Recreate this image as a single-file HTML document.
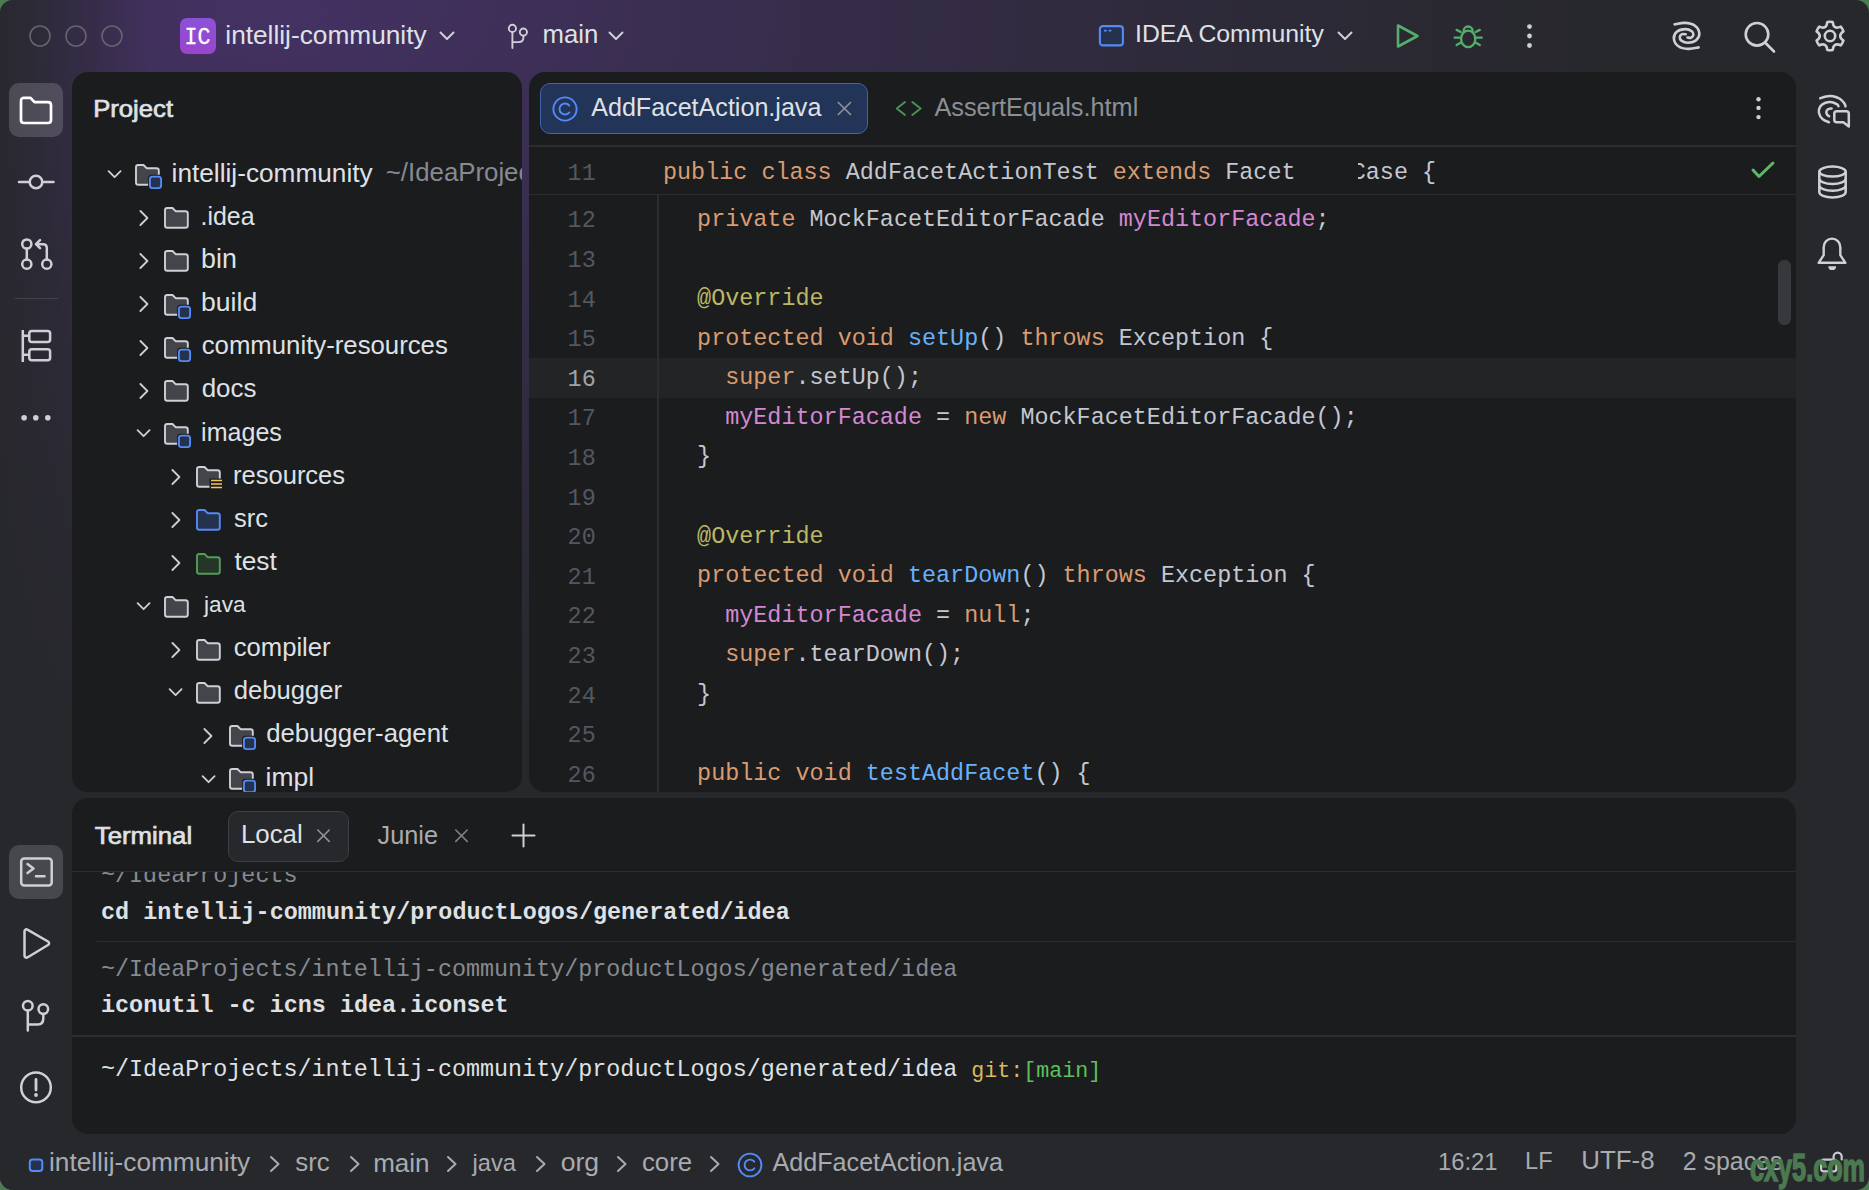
<!DOCTYPE html><html><head><meta charset="utf-8"><style>
html,body{margin:0;padding:0;}
body{width:1869px;height:1190px;overflow:hidden;position:relative;background:#4c7d51;}
.t{position:absolute;white-space:pre;}
.s{font-family:"Liberation Sans", sans-serif;}
.m{font-family:"Liberation Mono", monospace;}
#win{position:absolute;left:0;top:0;width:1869px;height:1190px;border-radius:13px;overflow:hidden;background:#27282c;}
#glow{position:absolute;left:0;top:0;width:1869px;height:1190px;background:linear-gradient(90deg, rgba(39,40,44,0.92) 0px, rgba(39,40,44,0.62) 55px, rgba(39,40,44,0) 150px), radial-gradient(ellipse 1350px 740px at 270px 10px, rgba(100,60,160,0.48) 0%, rgba(96,58,155,0.33) 30%, rgba(92,56,150,0.14) 65%, rgba(90,52,150,0) 100%);}
.panel{position:absolute;background:#1b1c1e;border-radius:16px;overflow:hidden;}
</style></head><body><div id="win"><div id="glow"></div>

<svg style="position:absolute;left:27.5px;top:24.2px;" width="24" height="24" viewBox="0 0 24 24" fill="none"><circle cx="12" cy="12" r="10" stroke="#65636f" stroke-width="1.6"/></svg>
<svg style="position:absolute;left:63.5px;top:24.2px;" width="24" height="24" viewBox="0 0 24 24" fill="none"><circle cx="12" cy="12" r="10" stroke="#65636f" stroke-width="1.6"/></svg>
<svg style="position:absolute;left:99.5px;top:24.2px;" width="24" height="24" viewBox="0 0 24 24" fill="none"><circle cx="12" cy="12" r="10" stroke="#65636f" stroke-width="1.6"/></svg>
<div style="position:absolute;left:180px;top:18px;width:36px;height:36px;border-radius:7px;background:linear-gradient(180deg,#8c51d8,#9a45cc);"></div>
<div class="t m" style="left:184.5px;top:27.6px;font-size:21.6px;line-height:21.6px;color:#ffffff;transform:scaleY(1.13);transform-origin:0 76.6%;-webkit-text-stroke:0.25px #fff;">IC</div>
<div class="t s" style="left:225.3px;top:21.9px;font-size:26.26px;line-height:26.26px;color:#dfe1e5;">intellij-community</div>
<svg style="position:absolute;left:439px;top:31px;" width="16" height="10" viewBox="0 0 16 10" fill="none"><path d="M1.5 1.5 L8 8 L14.5 1.5" stroke="#ced0d6" stroke-width="2" stroke-linecap="round" stroke-linejoin="round"/></svg>
<svg style="position:absolute;left:500px;top:15px;" width="40" height="40" viewBox="0 0 40 40" fill="none"><circle cx="12.4" cy="13.4" r="3.6" stroke="#ced0d6" stroke-width="1.9"/><circle cx="23.4" cy="17.1" r="3.6" stroke="#ced0d6" stroke-width="1.9"/><path d="M12.4 17 V33 M23.4 20.7 V22.3 C23.4 25.3 21.7 27.1 18.8 27.1 H12.4" stroke="#ced0d6" stroke-width="1.9" stroke-linecap="round"/></svg>
<div class="t s" style="left:542.6px;top:22.3px;font-size:25.72px;line-height:25.72px;color:#dfe1e5;">main</div>
<svg style="position:absolute;left:608px;top:31px;" width="16" height="10" viewBox="0 0 16 10" fill="none"><path d="M1.5 1.5 L8 8 L14.5 1.5" stroke="#ced0d6" stroke-width="2" stroke-linecap="round" stroke-linejoin="round"/></svg>
<svg style="position:absolute;left:1098px;top:24px;" width="27" height="24" viewBox="0 0 27 24" fill="none"><rect x="1.9" y="2.1" width="23" height="19.3" rx="3" fill="#25324d" stroke="#548af7" stroke-width="2.1"/><path d="M6 6.6 H8.8 M10.6 6.6 H13.4" stroke="#548af7" stroke-width="1.7"/></svg>
<div class="t s" style="left:1135.0px;top:22.4px;font-size:24.81px;line-height:24.81px;color:#dfe1e5;">IDEA Community</div>
<svg style="position:absolute;left:1337px;top:31px;" width="16" height="10" viewBox="0 0 16 10" fill="none"><path d="M1.5 1.5 L8 8 L14.5 1.5" stroke="#ced0d6" stroke-width="2" stroke-linecap="round" stroke-linejoin="round"/></svg>
<svg style="position:absolute;left:1393px;top:21px;" width="30" height="30" viewBox="0 0 30 30" fill="none"><path d="M5 4.5 L24.5 15 L5 25.5 Z" stroke="#55ae6b" stroke-width="2.6" stroke-linejoin="round"/></svg>
<svg style="position:absolute;left:1450px;top:20px;" width="36" height="30" viewBox="0 0 36 30" fill="none"><path d="M13.6 11 A4.5 4.5 0 0 1 22.6 11" stroke="#55ae6b" stroke-width="2.3" stroke-linecap="round"/><ellipse cx="18.2" cy="18.9" rx="7.1" ry="8.2" stroke="#55ae6b" stroke-width="2.3"/><path d="M6.6 9.9 L10.8 12 M4.6 17.7 H10.5 M6.6 25.1 L11 22.6 M29.8 9.9 L25.6 12 M31.8 17.7 H25.9 M29.8 25.1 L25.4 22.6" stroke="#55ae6b" stroke-width="2.3" stroke-linecap="round"/></svg>
<svg style="position:absolute;left:1525px;top:24px;" width="10" height="26" viewBox="0 0 10 26" fill="none"><circle cx="4.5" cy="2.6" r="2.4" fill="#ced0d6"/><circle cx="4.5" cy="12" r="2.4" fill="#ced0d6"/><circle cx="4.5" cy="21.5" r="2.4" fill="#ced0d6"/></svg>
<svg style="position:absolute;left:1666px;top:16px;" width="40" height="40" viewBox="0 0 40 40" fill="none"><path d="M8.60 8.40 C10.33 8.15 15.63 6.70 19.00 6.90 C22.37 7.10 26.42 7.92 28.80 9.60 C31.18 11.28 33.03 14.60 33.30 17.00 C33.57 19.40 32.28 22.38 30.40 24.00 C28.52 25.62 24.50 26.60 22.00 26.70 C19.50 26.80 16.77 25.57 15.40 24.60 C14.03 23.63 13.68 21.98 13.80 20.90 C13.92 19.82 15.12 18.53 16.10 18.10 C17.08 17.67 19.10 18.27 19.70 18.30 " stroke="#ced0d6" stroke-width="2.6" stroke-linecap="round"/><path d="M32.60 31.40 C30.87 31.65 25.57 33.10 22.20 32.90 C18.83 32.70 14.78 31.88 12.40 30.20 C10.02 28.52 8.17 25.20 7.90 22.80 C7.63 20.40 8.92 17.42 10.80 15.80 C12.68 14.18 16.70 13.20 19.20 13.10 C21.70 13.00 24.43 14.23 25.80 15.20 C27.17 16.17 27.52 17.82 27.40 18.90 C27.28 19.98 26.08 21.27 25.10 21.70 C24.12 22.13 22.10 21.53 21.50 21.50 " stroke="#ced0d6" stroke-width="2.6" stroke-linecap="round"/></svg>
<svg style="position:absolute;left:1741px;top:19px;" width="36" height="36" viewBox="0 0 36 36" fill="none"><circle cx="16" cy="15.3" r="11.3" stroke="#ced0d6" stroke-width="2.6"/><path d="M24.5 24 L33 32.5" stroke="#ced0d6" stroke-width="2.6" stroke-linecap="round"/></svg>
<svg style="position:absolute;left:1814px;top:20px;" width="32" height="32" viewBox="0 0 32 32" fill="none"><path d="M13.29 2.06 A14.2 14.2 0 0 1 18.71 2.06 Q19.49 9.96 26.72 6.68 A14.2 14.2 0 0 1 29.43 11.38 Q22.97 16.00 29.43 20.62 A14.2 14.2 0 0 1 26.72 25.32 Q19.49 22.04 18.71 29.94 A14.2 14.2 0 0 1 13.29 29.94 Q12.51 22.04 5.28 25.32 A14.2 14.2 0 0 1 2.57 20.62 Q9.03 16.00 2.57 11.38 A14.2 14.2 0 0 1 5.28 6.68 Q12.51 9.96 13.29 2.06 Z" stroke="#ced0d6" stroke-width="2.6" stroke-linejoin="round"/><circle cx="16" cy="16" r="5.2" stroke="#ced0d6" stroke-width="2.6"/></svg>
<div style="position:absolute;left:9px;top:83px;width:54px;height:54px;background:rgba(255,255,255,0.16);border-radius:10px;"></div>
<svg style="position:absolute;left:18px;top:95px;" width="36" height="30" viewBox="0 0 36 30" fill="none"><path d="M3 6 C3 4 4 2.8 6 2.8 H12.5 L16.5 7.2 H30 C32 7.2 33 8.3 33 10.3 V25 C33 27 32 28 30 28 H6 C4 28 3 27 3 25 Z" stroke="#ffffff" stroke-width="2.7" stroke-linejoin="round"/></svg>
<svg style="position:absolute;left:16px;top:172px;" width="40" height="20" viewBox="0 0 40 20" fill="none"><circle cx="20" cy="10" r="6.3" stroke="#ced0d6" stroke-width="2.6"/><path d="M3 10 H13.5 M26.5 10 H37.5" stroke="#ced0d6" stroke-width="2.6" stroke-linecap="round"/></svg>
<svg style="position:absolute;left:16px;top:234px;" width="40" height="40" viewBox="0 0 40 40" fill="none"><circle cx="10.8" cy="10" r="4.6" stroke="#ced0d6" stroke-width="2.5"/><circle cx="10.8" cy="30.2" r="4.6" stroke="#ced0d6" stroke-width="2.5"/><circle cx="30.8" cy="30.2" r="4.6" stroke="#ced0d6" stroke-width="2.5"/><path d="M10.8 14.6 V25.6 M30.8 25.6 V14 C30.8 11.5 29.5 10.2 27 10.2 H20.5 M24 6.2 L20 10.2 L24 14.2" stroke="#ced0d6" stroke-width="2.5" stroke-linecap="round" stroke-linejoin="round"/></svg>
<div style="position:absolute;left:14.5px;top:298px;width:43.5px;height:1.4px;background:#414249;border-radius:0px;"></div>
<svg style="position:absolute;left:18px;top:326px;" width="36" height="40" viewBox="0 0 36 40" fill="none"><path d="M4.8 4 V36 M4.8 9.8 H11 M4.8 28.7 H11" stroke="#ced0d6" stroke-width="2.5"/><rect x="11.3" y="5" width="20.8" height="11" rx="2.5" stroke="#ced0d6" stroke-width="2.5"/><rect x="11.3" y="23.3" width="20.8" height="11" rx="2.5" stroke="#ced0d6" stroke-width="2.5"/></svg>
<svg style="position:absolute;left:18px;top:412px;" width="36" height="12" viewBox="0 0 36 12" fill="none"><circle cx="6.1" cy="5.8" r="2.8" fill="#ced0d6"/><circle cx="17.8" cy="5.8" r="2.8" fill="#ced0d6"/><circle cx="29.8" cy="5.8" r="2.8" fill="#ced0d6"/></svg>
<div style="position:absolute;left:9px;top:845px;width:54px;height:54px;background:rgba(255,255,255,0.15);border-radius:10px;"></div>
<svg style="position:absolute;left:18px;top:854px;" width="36" height="36" viewBox="0 0 36 36" fill="none"><rect x="3.2" y="4.6" width="30.5" height="27" rx="3" stroke="#ced0d6" stroke-width="2.5"/><path d="M9.5 10 L15.5 14.5 L9.5 19 M18 22.3 H26.5" stroke="#ced0d6" stroke-width="2.5" stroke-linecap="round" stroke-linejoin="round"/></svg>
<svg style="position:absolute;left:18px;top:926px;" width="36" height="40" viewBox="0 0 36 40" fill="none"><path d="M6.5 5.5 C6.5 3.5 8 2.8 9.8 3.8 L30 15.5 C31.5 16.5 31.5 18 30 19 L9.8 31.2 C8 32.2 6.5 31.5 6.5 29.5 Z" stroke="#ced0d6" stroke-width="2.5" stroke-linejoin="round"/></svg>
<svg style="position:absolute;left:18px;top:996px;" width="36" height="40" viewBox="0 0 36 40" fill="none"><circle cx="9.8" cy="9.8" r="4.8" stroke="#ced0d6" stroke-width="2.5"/><circle cx="25.3" cy="13.1" r="4.8" stroke="#ced0d6" stroke-width="2.5"/><path d="M9.8 14.6 V34.5 M25.3 17.9 V22.3 C25.3 26 23.5 28.6 19.8 28.6 H9.8" stroke="#ced0d6" stroke-width="2.5" stroke-linecap="round"/></svg>
<svg style="position:absolute;left:18px;top:1069px;" width="36" height="36" viewBox="0 0 36 36" fill="none"><circle cx="18" cy="18.4" r="14.8" stroke="#ced0d6" stroke-width="2.5"/><path d="M18 10.5 V21" stroke="#ced0d6" stroke-width="2.8" stroke-linecap="round"/><circle cx="18" cy="26" r="1.9" fill="#ced0d6"/></svg>
<svg style="position:absolute;left:1812px;top:88px;" width="44" height="44" viewBox="0 0 44 44" fill="none"><path d="M8.30 10.30 C9.25 9.98 11.88 8.73 14.00 8.40 C16.12 8.07 18.70 7.90 21.00 8.30 C23.30 8.70 25.92 9.65 27.80 10.80 C29.68 11.95 31.35 13.93 32.30 15.20 C33.25 16.47 33.30 17.87 33.50 18.40 " stroke="#ced0d6" stroke-width="2.5" stroke-linecap="round"/><path d="M17.00 34.30 C15.93 33.78 12.28 32.82 10.60 31.20 C8.92 29.58 7.27 26.75 6.90 24.60 C6.53 22.45 7.28 19.95 8.40 18.30 C9.52 16.65 11.67 15.38 13.60 14.70 C15.53 14.02 18.07 13.92 20.00 14.20 C21.93 14.48 24.12 15.73 25.20 16.40 C26.28 17.07 26.28 17.90 26.50 18.20 " stroke="#ced0d6" stroke-width="2.5" stroke-linecap="round"/><path d="M19.60 20.50 C19.02 20.63 16.98 20.73 16.10 21.30 C15.22 21.87 14.45 22.98 14.30 23.90 C14.15 24.82 14.73 26.07 15.20 26.80 C15.67 27.53 16.78 28.05 17.10 28.30 " stroke="#ced0d6" stroke-width="2.5" stroke-linecap="round"/><path d="M24.8 23.3 H34.3 Q36.8 23.3 36.8 25.8 V38.4 L31.3 34.3 H24.8 Q22.3 34.3 22.3 31.8 V25.8 Q22.3 23.3 24.8 23.3 Z" stroke="#ced0d6" stroke-width="2.5" stroke-linejoin="round"/></svg>
<svg style="position:absolute;left:1814px;top:162px;" width="40" height="40" viewBox="0 0 40 40" fill="none"><ellipse cx="18.5" cy="9.6" rx="13.2" ry="5" stroke="#ced0d6" stroke-width="2.5"/><path d="M5.3 9.6 V30 C5.3 33 11 35.4 18.5 35.4 C26 35.4 31.7 33 31.7 30 V9.6 M5.3 16.5 C5.3 19.5 11 22 18.5 22 C26 22 31.7 19.5 31.7 16.5 M5.3 23.3 C5.3 26.3 11 28.8 18.5 28.8 C26 28.8 31.7 26.3 31.7 23.3" stroke="#ced0d6" stroke-width="2.5"/></svg>
<svg style="position:absolute;left:1814px;top:234px;" width="40" height="40" viewBox="0 0 40 40" fill="none"><path d="M4.6 28.8 L9.7 21.2 V12.9 A8.3 8.3 0 0 1 26.3 12.9 V21.2 L31.4 28.8 Z" stroke="#ced0d6" stroke-width="2.4" stroke-linejoin="round"/><path d="M14.3 32.2 H22.1 A3.9 3.9 0 0 1 14.3 32.2 Z" fill="#ced0d6"/></svg>
<div class="panel" style="left:72px;top:72px;width:450px;height:720px;">
<div class="t s" style="left:21.2px;top:23.9px;font-size:25.67px;line-height:25.67px;color:#dfe1e5;-webkit-text-stroke:0.75px #dfe1e5;transform:scaleY(0.93);transform-origin:0 84.67%;">Project</div>
<svg style="position:absolute;left:34.0px;top:97.4px;" width="18" height="12" viewBox="0 0 18 12" fill="none"><path d="M2.6 2.2 L8.6 8.2 L14.6 2.2" stroke="#ced0d6" stroke-width="1.8" stroke-linecap="round" stroke-linejoin="round"/></svg>
<svg style="position:absolute;left:61.849999999999994px;top:91.14999999999998px;" width="30" height="30" viewBox="0 0 30 30" fill="none"><path d="M2 4.3 C2 2.8 2.8 2 4.3 2 H9.5 L12.6 5.2 H22.5 C24 5.2 24.8 6 24.8 7.5 V19.5 C24.8 21 24 21.8 22.5 21.8 H4.3 C2.8 21.8 2 21 2 19.5 Z" fill="#43454a" stroke="#ced0d6" stroke-width="1.9" stroke-linejoin="round"/><rect x="14.1" y="11.8" width="14.8" height="15.2" rx="3.6" fill="#1b1c1e"/><rect x="15.9" y="13.6" width="11.2" height="11.5" rx="2.6" fill="#25324d" stroke="#548af7" stroke-width="1.9"/></svg>
<div class="t s" style="left:99.6px;top:87.8px;font-size:26.22px;line-height:26.22px;color:#dfe1e5;">intellij-community</div>
<div class="t s" style="left:313.8px;top:88.2px;font-size:25.8px;line-height:25.8px;color:#868a91;">~/IdeaProjects</div>
<svg style="position:absolute;left:65.5px;top:137.16px;" width="12" height="18" viewBox="0 0 12 18" fill="none"><path d="M2.4 2 L9.4 9 L2.4 16" stroke="#ced0d6" stroke-width="1.8" stroke-linecap="round" stroke-linejoin="round"/></svg>
<svg style="position:absolute;left:90.94999999999999px;top:134.30999999999997px;" width="30" height="30" viewBox="0 0 30 30" fill="none"><path d="M2 4.3 C2 2.8 2.8 2 4.3 2 H9.5 L12.6 5.2 H22.5 C24 5.2 24.8 6 24.8 7.5 V19.5 C24.8 21 24 21.8 22.5 21.8 H4.3 C2.8 21.8 2 21 2 19.5 Z" fill="#43454a" stroke="#ced0d6" stroke-width="1.9" stroke-linejoin="round"/></svg>
<div class="t s" style="left:128.5px;top:132.0px;font-size:24.95px;line-height:24.95px;color:#dfe1e5;">.idea</div>
<svg style="position:absolute;left:65.5px;top:180.32px;" width="12" height="18" viewBox="0 0 12 18" fill="none"><path d="M2.4 2 L9.4 9 L2.4 16" stroke="#ced0d6" stroke-width="1.8" stroke-linecap="round" stroke-linejoin="round"/></svg>
<svg style="position:absolute;left:90.94999999999999px;top:177.46999999999997px;" width="30" height="30" viewBox="0 0 30 30" fill="none"><path d="M2 4.3 C2 2.8 2.8 2 4.3 2 H9.5 L12.6 5.2 H22.5 C24 5.2 24.8 6 24.8 7.5 V19.5 C24.8 21 24 21.8 22.5 21.8 H4.3 C2.8 21.8 2 21 2 19.5 Z" fill="#43454a" stroke="#ced0d6" stroke-width="1.9" stroke-linejoin="round"/></svg>
<div class="t s" style="left:129.1px;top:173.6px;font-size:26.8px;line-height:26.8px;color:#dfe1e5;">bin</div>
<svg style="position:absolute;left:65.5px;top:223.48000000000002px;" width="12" height="18" viewBox="0 0 12 18" fill="none"><path d="M2.4 2 L9.4 9 L2.4 16" stroke="#ced0d6" stroke-width="1.8" stroke-linecap="round" stroke-linejoin="round"/></svg>
<svg style="position:absolute;left:90.94999999999999px;top:220.63px;" width="30" height="30" viewBox="0 0 30 30" fill="none"><path d="M2 4.3 C2 2.8 2.8 2 4.3 2 H9.5 L12.6 5.2 H22.5 C24 5.2 24.8 6 24.8 7.5 V19.5 C24.8 21 24 21.8 22.5 21.8 H4.3 C2.8 21.8 2 21 2 19.5 Z" fill="#43454a" stroke="#ced0d6" stroke-width="1.9" stroke-linejoin="round"/><rect x="14.1" y="11.8" width="14.8" height="15.2" rx="3.6" fill="#1b1c1e"/><rect x="15.9" y="13.6" width="11.2" height="11.5" rx="2.6" fill="#25324d" stroke="#548af7" stroke-width="1.9"/></svg>
<div class="t s" style="left:129.1px;top:217.0px;font-size:26.55px;line-height:26.55px;color:#dfe1e5;">build</div>
<svg style="position:absolute;left:65.5px;top:266.64px;" width="12" height="18" viewBox="0 0 12 18" fill="none"><path d="M2.4 2 L9.4 9 L2.4 16" stroke="#ced0d6" stroke-width="1.8" stroke-linecap="round" stroke-linejoin="round"/></svg>
<svg style="position:absolute;left:90.94999999999999px;top:263.78999999999996px;" width="30" height="30" viewBox="0 0 30 30" fill="none"><path d="M2 4.3 C2 2.8 2.8 2 4.3 2 H9.5 L12.6 5.2 H22.5 C24 5.2 24.8 6 24.8 7.5 V19.5 C24.8 21 24 21.8 22.5 21.8 H4.3 C2.8 21.8 2 21 2 19.5 Z" fill="#43454a" stroke="#ced0d6" stroke-width="1.9" stroke-linejoin="round"/><rect x="14.1" y="11.8" width="14.8" height="15.2" rx="3.6" fill="#1b1c1e"/><rect x="15.9" y="13.6" width="11.2" height="11.5" rx="2.6" fill="#25324d" stroke="#548af7" stroke-width="1.9"/></svg>
<div class="t s" style="left:129.7px;top:260.8px;font-size:25.75px;line-height:25.75px;color:#dfe1e5;">community-resources</div>
<svg style="position:absolute;left:65.5px;top:309.79999999999995px;" width="12" height="18" viewBox="0 0 12 18" fill="none"><path d="M2.4 2 L9.4 9 L2.4 16" stroke="#ced0d6" stroke-width="1.8" stroke-linecap="round" stroke-linejoin="round"/></svg>
<svg style="position:absolute;left:90.94999999999999px;top:306.94999999999993px;" width="30" height="30" viewBox="0 0 30 30" fill="none"><path d="M2 4.3 C2 2.8 2.8 2 4.3 2 H9.5 L12.6 5.2 H22.5 C24 5.2 24.8 6 24.8 7.5 V19.5 C24.8 21 24 21.8 22.5 21.8 H4.3 C2.8 21.8 2 21 2 19.5 Z" fill="#43454a" stroke="#ced0d6" stroke-width="1.9" stroke-linejoin="round"/></svg>
<div class="t s" style="left:129.7px;top:303.9px;font-size:25.9px;line-height:25.9px;color:#dfe1e5;">docs</div>
<svg style="position:absolute;left:63.0px;top:356.35999999999996px;" width="18" height="12" viewBox="0 0 18 12" fill="none"><path d="M2.6 2.2 L8.6 8.2 L14.6 2.2" stroke="#ced0d6" stroke-width="1.8" stroke-linecap="round" stroke-linejoin="round"/></svg>
<svg style="position:absolute;left:90.94999999999999px;top:350.10999999999996px;" width="30" height="30" viewBox="0 0 30 30" fill="none"><path d="M2 4.3 C2 2.8 2.8 2 4.3 2 H9.5 L12.6 5.2 H22.5 C24 5.2 24.8 6 24.8 7.5 V19.5 C24.8 21 24 21.8 22.5 21.8 H4.3 C2.8 21.8 2 21 2 19.5 Z" fill="#43454a" stroke="#ced0d6" stroke-width="1.9" stroke-linejoin="round"/><rect x="14.1" y="11.8" width="14.8" height="15.2" rx="3.6" fill="#1b1c1e"/><rect x="15.9" y="13.6" width="11.2" height="11.5" rx="2.6" fill="#25324d" stroke="#548af7" stroke-width="1.9"/></svg>
<div class="t s" style="left:129.1px;top:347.7px;font-size:25.06px;line-height:25.06px;color:#dfe1e5;">images</div>
<svg style="position:absolute;left:97.80000000000001px;top:396.12px;" width="12" height="18" viewBox="0 0 12 18" fill="none"><path d="M2.4 2 L9.4 9 L2.4 16" stroke="#ced0d6" stroke-width="1.8" stroke-linecap="round" stroke-linejoin="round"/></svg>
<svg style="position:absolute;left:123.25px;top:393.27px;" width="30" height="30" viewBox="0 0 30 30" fill="none"><path d="M2 4.3 C2 2.8 2.8 2 4.3 2 H9.5 L12.6 5.2 H22.5 C24 5.2 24.8 6 24.8 7.5 V19.5 C24.8 21 24 21.8 22.5 21.8 H4.3 C2.8 21.8 2 21 2 19.5 Z" fill="#43454a" stroke="#ced0d6" stroke-width="1.9" stroke-linejoin="round"/><rect x="14.5" y="13.5" width="13" height="12" fill="#1b1c1e"/><path d="M16 15.5 H27 M16 19 H27 M16 22.5 H27" stroke="#f2c55c" stroke-width="1.7"/></svg>
<div class="t s" style="left:161.1px;top:390.5px;font-size:25.5px;line-height:25.5px;color:#dfe1e5;">resources</div>
<svg style="position:absolute;left:97.80000000000001px;top:439.28px;" width="12" height="18" viewBox="0 0 12 18" fill="none"><path d="M2.4 2 L9.4 9 L2.4 16" stroke="#ced0d6" stroke-width="1.8" stroke-linecap="round" stroke-linejoin="round"/></svg>
<svg style="position:absolute;left:123.25px;top:436.42999999999995px;" width="30" height="30" viewBox="0 0 30 30" fill="none"><path d="M2 4.3 C2 2.8 2.8 2 4.3 2 H9.5 L12.6 5.2 H22.5 C24 5.2 24.8 6 24.8 7.5 V19.5 C24.8 21 24 21.8 22.5 21.8 H4.3 C2.8 21.8 2 21 2 19.5 Z" fill="#25324d" stroke="#548af7" stroke-width="1.9" stroke-linejoin="round"/></svg>
<div class="t s" style="left:162.1px;top:433.7px;font-size:25.44px;line-height:25.44px;color:#dfe1e5;">src</div>
<svg style="position:absolute;left:97.80000000000001px;top:482.43999999999994px;" width="12" height="18" viewBox="0 0 12 18" fill="none"><path d="M2.4 2 L9.4 9 L2.4 16" stroke="#ced0d6" stroke-width="1.8" stroke-linecap="round" stroke-linejoin="round"/></svg>
<svg style="position:absolute;left:123.25px;top:479.59000000000003px;" width="30" height="30" viewBox="0 0 30 30" fill="none"><path d="M2 4.3 C2 2.8 2.8 2 4.3 2 H9.5 L12.6 5.2 H22.5 C24 5.2 24.8 6 24.8 7.5 V19.5 C24.8 21 24 21.8 22.5 21.8 H4.3 C2.8 21.8 2 21 2 19.5 Z" fill="#253526" stroke="#559c5b" stroke-width="1.9" stroke-linejoin="round"/></svg>
<div class="t s" style="left:162.4px;top:476.2px;font-size:26.29px;line-height:26.29px;color:#dfe1e5;">test</div>
<svg style="position:absolute;left:63.0px;top:528.9999999999999px;" width="18" height="12" viewBox="0 0 18 12" fill="none"><path d="M2.6 2.2 L8.6 8.2 L14.6 2.2" stroke="#ced0d6" stroke-width="1.8" stroke-linecap="round" stroke-linejoin="round"/></svg>
<svg style="position:absolute;left:90.94999999999999px;top:522.75px;" width="30" height="30" viewBox="0 0 30 30" fill="none"><path d="M2 4.3 C2 2.8 2.8 2 4.3 2 H9.5 L12.6 5.2 H22.5 C24 5.2 24.8 6 24.8 7.5 V19.5 C24.8 21 24 21.8 22.5 21.8 H4.3 C2.8 21.8 2 21 2 19.5 Z" fill="#43454a" stroke="#ced0d6" stroke-width="1.9" stroke-linejoin="round"/></svg>
<div class="t s" style="left:132.1px;top:522.4px;font-size:22.63px;line-height:22.63px;color:#dfe1e5;">java</div>
<svg style="position:absolute;left:97.80000000000001px;top:568.76px;" width="12" height="18" viewBox="0 0 12 18" fill="none"><path d="M2.4 2 L9.4 9 L2.4 16" stroke="#ced0d6" stroke-width="1.8" stroke-linecap="round" stroke-linejoin="round"/></svg>
<svg style="position:absolute;left:123.25px;top:565.9100000000001px;" width="30" height="30" viewBox="0 0 30 30" fill="none"><path d="M2 4.3 C2 2.8 2.8 2 4.3 2 H9.5 L12.6 5.2 H22.5 C24 5.2 24.8 6 24.8 7.5 V19.5 C24.8 21 24 21.8 22.5 21.8 H4.3 C2.8 21.8 2 21 2 19.5 Z" fill="#43454a" stroke="#ced0d6" stroke-width="1.9" stroke-linejoin="round"/></svg>
<div class="t s" style="left:161.7px;top:563.0px;font-size:25.65px;line-height:25.65px;color:#dfe1e5;">compiler</div>
<svg style="position:absolute;left:95.25px;top:615.3199999999999px;" width="18" height="12" viewBox="0 0 18 12" fill="none"><path d="M2.6 2.2 L8.6 8.2 L14.6 2.2" stroke="#ced0d6" stroke-width="1.8" stroke-linecap="round" stroke-linejoin="round"/></svg>
<svg style="position:absolute;left:123.25px;top:609.07px;" width="30" height="30" viewBox="0 0 30 30" fill="none"><path d="M2 4.3 C2 2.8 2.8 2 4.3 2 H9.5 L12.6 5.2 H22.5 C24 5.2 24.8 6 24.8 7.5 V19.5 C24.8 21 24 21.8 22.5 21.8 H4.3 C2.8 21.8 2 21 2 19.5 Z" fill="#43454a" stroke="#ced0d6" stroke-width="1.9" stroke-linejoin="round"/></svg>
<div class="t s" style="left:161.7px;top:606.2px;font-size:25.67px;line-height:25.67px;color:#dfe1e5;">debugger</div>
<svg style="position:absolute;left:130.1px;top:655.0799999999999px;" width="12" height="18" viewBox="0 0 12 18" fill="none"><path d="M2.4 2 L9.4 9 L2.4 16" stroke="#ced0d6" stroke-width="1.8" stroke-linecap="round" stroke-linejoin="round"/></svg>
<svg style="position:absolute;left:155.54999999999998px;top:652.23px;" width="30" height="30" viewBox="0 0 30 30" fill="none"><path d="M2 4.3 C2 2.8 2.8 2 4.3 2 H9.5 L12.6 5.2 H22.5 C24 5.2 24.8 6 24.8 7.5 V19.5 C24.8 21 24 21.8 22.5 21.8 H4.3 C2.8 21.8 2 21 2 19.5 Z" fill="#43454a" stroke="#ced0d6" stroke-width="1.9" stroke-linejoin="round"/><rect x="14.1" y="11.8" width="14.8" height="15.2" rx="3.6" fill="#1b1c1e"/><rect x="15.9" y="13.6" width="11.2" height="11.5" rx="2.6" fill="#25324d" stroke="#548af7" stroke-width="1.9"/></svg>
<div class="t s" style="left:194.2px;top:649.3px;font-size:25.77px;line-height:25.77px;color:#dfe1e5;">debugger-agent</div>
<svg style="position:absolute;left:127.5px;top:701.64px;" width="18" height="12" viewBox="0 0 18 12" fill="none"><path d="M2.6 2.2 L8.6 8.2 L14.6 2.2" stroke="#ced0d6" stroke-width="1.8" stroke-linecap="round" stroke-linejoin="round"/></svg>
<svg style="position:absolute;left:155.54999999999998px;top:695.3900000000001px;" width="30" height="30" viewBox="0 0 30 30" fill="none"><path d="M2 4.3 C2 2.8 2.8 2 4.3 2 H9.5 L12.6 5.2 H22.5 C24 5.2 24.8 6 24.8 7.5 V19.5 C24.8 21 24 21.8 22.5 21.8 H4.3 C2.8 21.8 2 21 2 19.5 Z" fill="#43454a" stroke="#ced0d6" stroke-width="1.9" stroke-linejoin="round"/><rect x="14.1" y="11.8" width="14.8" height="15.2" rx="3.6" fill="#1b1c1e"/><rect x="15.9" y="13.6" width="11.2" height="11.5" rx="2.6" fill="#25324d" stroke="#548af7" stroke-width="1.9"/></svg>
<div class="t s" style="left:193.5px;top:691.8px;font-size:26.47px;line-height:26.47px;color:#dfe1e5;">impl</div>
</div>
<div class="panel" style="left:529px;top:72px;width:1267px;height:720px;">
<div style="position:absolute;left:11px;top:11.4px;width:328px;height:50.6px;box-sizing:border-box;border-radius:10px;background:#223457;border:1.7px solid #4066ac;"></div>
<svg style="position:absolute;left:21.299999999999955px;top:21.599999999999994px;" width="30" height="30" viewBox="0 0 30 30" fill="none"><circle cx="15" cy="15" r="11.6" stroke="#548af7" stroke-width="1.9"/><path d="M19.33 11.61 A5.5 5.5 0 1 0 19.33 18.39" stroke="#548af7" stroke-width="1.9" stroke-linecap="round"/></svg>
<div class="t s" style="left:62.2px;top:22.9px;font-size:25.1px;line-height:25.1px;color:#dfe1e5;">AddFacetAction.java</div>
<svg style="position:absolute;left:306px;top:28px;" width="18" height="18" viewBox="0 0 18 18" fill="none"><path d="M3.3 2.5 L15.5 14.5 M15.5 2.5 L3.3 14.5" stroke="#8f9297" stroke-width="1.7" stroke-linecap="round"/></svg>
<svg style="position:absolute;left:365px;top:27px;" width="30" height="20" viewBox="0 0 30 20" fill="none"><path d="M11 3 L2.8 9.5 L11 16 M18.3 3 L26.6 9.5 L18.3 16" stroke="#4b9055" stroke-width="2" stroke-linecap="round" stroke-linejoin="round"/></svg>
<div class="t s" style="left:405.4px;top:22.8px;font-size:25.31px;line-height:25.31px;color:#8c8f94;">AssertEquals.html</div>
<svg style="position:absolute;left:1225px;top:23px;" width="10" height="26" viewBox="0 0 10 26" fill="none"><circle cx="4.5" cy="4.2" r="2.2" fill="#ced0d6"/><circle cx="4.5" cy="12.9" r="2.2" fill="#ced0d6"/><circle cx="4.5" cy="22.1" r="2.2" fill="#ced0d6"/></svg>
<div style="position:absolute;left:0px;top:73px;width:1267px;height:1.6px;background:#2b2d30;border-radius:0px;"></div>
<div style="position:absolute;left:0px;top:121.5px;width:1267px;height:1.6px;background:#2b2d30;border-radius:0px;"></div>
<div style="position:absolute;left:0px;top:285.5px;width:1267px;height:40px;background:#222426;border-radius:0px;"></div>
<div style="position:absolute;left:128px;top:123px;width:1.5px;height:600px;background:#2b2d30;border-radius:0px;"></div>
<div style="position:absolute;left:1249px;top:188px;width:12.5px;height:65px;background:#37383c;border-radius:6px;"></div>
<svg style="position:absolute;left:1221px;top:88px;" width="26" height="20" viewBox="0 0 26 20" fill="none"><path d="M3 10 L9 16.5 L23 3" stroke="#5fb865" stroke-width="3" stroke-linecap="round" stroke-linejoin="round"/></svg>
<div class="t m" style="left:38.6px;top:90.2px;font-size:23.43px;line-height:23.43px;color:#54575e;">11</div>
<div class="t m" style="left:134.0px;top:88.6px;font-size:23.43px;line-height:23.43px;color:#c4c7d0;"><span style="color:#d99b70">public </span><span style="color:#d99b70">class </span><span style="color:#c4c7d0">AddFacetActionTest </span><span style="color:#d99b70">extends </span><span style="color:#c4c7d0">FacetTestCase {</span></div>
<div style="position:absolute;left:764.5px;top:78px;width:64.5px;height:42px;background:#1b1c1e;border-radius:0px;"></div>
<div class="t m" style="left:38.6px;top:137.4px;font-size:23.43px;line-height:23.43px;color:#54575e;">12</div>
<div class="t m" style="left:168.1px;top:135.8px;font-size:23.43px;line-height:23.43px;color:#c4c7d0;"><span style="color:#d99b70">private </span><span style="color:#c4c7d0">MockFacetEditorFacade </span><span style="color:#d488d2">myEditorFacade</span><span style="color:#c4c7d0">;</span></div>
<div class="t m" style="left:38.6px;top:177.0px;font-size:23.43px;line-height:23.43px;color:#54575e;">13</div>
<div class="t m" style="left:168.1px;top:175.4px;font-size:23.43px;line-height:23.43px;color:#c4c7d0;"></div>
<div class="t m" style="left:38.6px;top:216.6px;font-size:23.43px;line-height:23.43px;color:#54575e;">14</div>
<div class="t m" style="left:168.1px;top:215.0px;font-size:23.43px;line-height:23.43px;color:#c4c7d0;"><span style="color:#bdb765">@Override</span></div>
<div class="t m" style="left:38.6px;top:256.2px;font-size:23.43px;line-height:23.43px;color:#54575e;">15</div>
<div class="t m" style="left:168.1px;top:254.6px;font-size:23.43px;line-height:23.43px;color:#c4c7d0;"><span style="color:#d99b70">protected </span><span style="color:#d99b70">void </span><span style="color:#68b0fa">setUp</span><span style="color:#c4c7d0">() </span><span style="color:#d99b70">throws </span><span style="color:#c4c7d0">Exception {</span></div>
<div class="t m" style="left:38.6px;top:295.8px;font-size:23.43px;line-height:23.43px;color:#a1a3ab;">16</div>
<div class="t m" style="left:196.2px;top:294.2px;font-size:23.43px;line-height:23.43px;color:#c4c7d0;"><span style="color:#d99b70">super</span><span style="color:#c4c7d0">.setUp();</span></div>
<div class="t m" style="left:38.6px;top:335.4px;font-size:23.43px;line-height:23.43px;color:#54575e;">17</div>
<div class="t m" style="left:196.2px;top:333.8px;font-size:23.43px;line-height:23.43px;color:#c4c7d0;"><span style="color:#d488d2">myEditorFacade</span><span style="color:#c4c7d0"> = </span><span style="color:#d99b70">new </span><span style="color:#c4c7d0">MockFacetEditorFacade();</span></div>
<div class="t m" style="left:38.6px;top:375.0px;font-size:23.43px;line-height:23.43px;color:#54575e;">18</div>
<div class="t m" style="left:168.1px;top:373.4px;font-size:23.43px;line-height:23.43px;color:#c4c7d0;"><span style="color:#c4c7d0">}</span></div>
<div class="t m" style="left:38.6px;top:414.6px;font-size:23.43px;line-height:23.43px;color:#54575e;">19</div>
<div class="t m" style="left:168.1px;top:413.0px;font-size:23.43px;line-height:23.43px;color:#c4c7d0;"></div>
<div class="t m" style="left:38.6px;top:454.2px;font-size:23.43px;line-height:23.43px;color:#54575e;">20</div>
<div class="t m" style="left:168.1px;top:452.6px;font-size:23.43px;line-height:23.43px;color:#c4c7d0;"><span style="color:#bdb765">@Override</span></div>
<div class="t m" style="left:38.6px;top:493.8px;font-size:23.43px;line-height:23.43px;color:#54575e;">21</div>
<div class="t m" style="left:168.1px;top:492.2px;font-size:23.43px;line-height:23.43px;color:#c4c7d0;"><span style="color:#d99b70">protected </span><span style="color:#d99b70">void </span><span style="color:#68b0fa">tearDown</span><span style="color:#c4c7d0">() </span><span style="color:#d99b70">throws </span><span style="color:#c4c7d0">Exception {</span></div>
<div class="t m" style="left:38.6px;top:533.4px;font-size:23.43px;line-height:23.43px;color:#54575e;">22</div>
<div class="t m" style="left:196.2px;top:531.8px;font-size:23.43px;line-height:23.43px;color:#c4c7d0;"><span style="color:#d488d2">myEditorFacade</span><span style="color:#c4c7d0"> = </span><span style="color:#d99b70">null</span><span style="color:#c4c7d0">;</span></div>
<div class="t m" style="left:38.6px;top:573.0px;font-size:23.43px;line-height:23.43px;color:#54575e;">23</div>
<div class="t m" style="left:196.2px;top:571.4px;font-size:23.43px;line-height:23.43px;color:#c4c7d0;"><span style="color:#d99b70">super</span><span style="color:#c4c7d0">.tearDown();</span></div>
<div class="t m" style="left:38.6px;top:612.6px;font-size:23.43px;line-height:23.43px;color:#54575e;">24</div>
<div class="t m" style="left:168.1px;top:611.0px;font-size:23.43px;line-height:23.43px;color:#c4c7d0;"><span style="color:#c4c7d0">}</span></div>
<div class="t m" style="left:38.6px;top:652.2px;font-size:23.43px;line-height:23.43px;color:#54575e;">25</div>
<div class="t m" style="left:168.1px;top:650.6px;font-size:23.43px;line-height:23.43px;color:#c4c7d0;"></div>
<div class="t m" style="left:38.6px;top:691.8px;font-size:23.43px;line-height:23.43px;color:#54575e;">26</div>
<div class="t m" style="left:168.1px;top:690.2px;font-size:23.43px;line-height:23.43px;color:#c4c7d0;"><span style="color:#d99b70">public </span><span style="color:#d99b70">void </span><span style="color:#68b0fa">testAddFacet</span><span style="color:#c4c7d0">() {</span></div>
</div>
<div class="panel" style="left:72px;top:798px;width:1724px;height:336px;">
<div class="t s" style="left:22.8px;top:24.6px;font-size:25.75px;line-height:25.75px;color:#dfe1e5;-webkit-text-stroke:0.75px #dfe1e5;transform:scaleY(0.93);transform-origin:0 84.67%;">Terminal</div>
<div style="position:absolute;left:156px;top:12.5px;width:121px;height:51px;box-sizing:border-box;border-radius:10px;background:#27282c;border:1.6px solid #3d3f44;"></div>
<div class="t s" style="left:168.9px;top:24.1px;font-size:25.89px;line-height:25.89px;color:#dfe1e5;">Local</div>
<svg style="position:absolute;left:243px;top:29px;" width="18" height="18" viewBox="0 0 18 18" fill="none"><path d="M2.8 3 L14.2 14.4 M14.2 3 L2.8 14.4" stroke="#8f9297" stroke-width="1.6" stroke-linecap="round"/></svg>
<div class="t s" style="left:305.6px;top:24.6px;font-size:25.29px;line-height:25.29px;color:#a8abb0;">Junie</div>
<svg style="position:absolute;left:380.5px;top:29px;" width="18" height="18" viewBox="0 0 18 18" fill="none"><path d="M2.8 3 L14.2 14.4 M14.2 3 L2.8 14.4" stroke="#7d8087" stroke-width="1.6" stroke-linecap="round"/></svg>
<svg style="position:absolute;left:438px;top:24.399999999999977px;" width="27" height="27" viewBox="0 0 27 27" fill="none"><path d="M13.5 2.5 V24.5 M2.5 13.5 H24.5" stroke="#ced0d6" stroke-width="2" stroke-linecap="round"/></svg>
<div style="position:absolute;left:0px;top:72.5px;width:1724px;height:1.6px;background:#2b2d30;border-radius:0px;"></div>
<div style="position:absolute;left:0;top:74px;width:1724px;height:261px;overflow:hidden;">
<div class="t m" style="left:29.0px;top:-6.6px;font-size:23.4px;line-height:23.4px;color:#868a91;">~/IdeaProjects</div>
<div class="t m" style="left:29.0px;top:28.9px;font-size:23.43px;line-height:23.43px;color:#dfe1e5;font-weight:bold;">cd intellij-community/productLogos/generated/idea</div>
<div style="position:absolute;left:25px;top:68.5px;width:1699px;height:1.6px;background:#2b2d30;border-radius:0px;"></div>
<div class="t m" style="left:29.0px;top:86.6px;font-size:23.4px;line-height:23.4px;color:#868a91;">~/IdeaProjects/intellij-community/productLogos/generated/idea</div>
<div class="t m" style="left:29.0px;top:121.6px;font-size:23.43px;line-height:23.43px;color:#dfe1e5;font-weight:bold;">iconutil -c icns idea.iconset</div>
<div style="position:absolute;left:0px;top:163.29999999999995px;width:1724px;height:1.6px;background:#2b2d30;border-radius:0px;"></div>
<div class="t m" style="left:29.0px;top:187.4px;font-size:23.4px;line-height:23.4px;color:#dfe1e5;">~/IdeaProjects/intellij-community/productLogos/generated/idea</div>
<div class="t m" style="left:899.2px;top:188.7px;font-size:21.66px;line-height:21.66px;color:#dfe1e5;"><span style="color:#d9b95c">git:</span><span style="color:#5cc05c">[main]</span></div>
</div>
</div>
<svg style="position:absolute;left:27px;top:1156px;" width="18" height="18" viewBox="0 0 18 18" fill="none"><rect x="2.8" y="3.5" width="12.5" height="11.5" rx="2.8" fill="#25324d" stroke="#548af7" stroke-width="2"/></svg>
<div class="t s" style="left:49.0px;top:1149.4px;font-size:26.22px;line-height:26.22px;color:#a8abb0;">intellij-community</div>
<svg style="position:absolute;left:268px;top:1154px;" width="14" height="20" viewBox="0 0 14 20" fill="none"><path d="M3 3 L10.5 10 L3 17" stroke="#a8abb0" stroke-width="2" stroke-linecap="round" stroke-linejoin="round"/></svg>
<svg style="position:absolute;left:348px;top:1154px;" width="14" height="20" viewBox="0 0 14 20" fill="none"><path d="M3 3 L10.5 10 L3 17" stroke="#a8abb0" stroke-width="2" stroke-linecap="round" stroke-linejoin="round"/></svg>
<svg style="position:absolute;left:445px;top:1154px;" width="14" height="20" viewBox="0 0 14 20" fill="none"><path d="M3 3 L10.5 10 L3 17" stroke="#a8abb0" stroke-width="2" stroke-linecap="round" stroke-linejoin="round"/></svg>
<svg style="position:absolute;left:534px;top:1154px;" width="14" height="20" viewBox="0 0 14 20" fill="none"><path d="M3 3 L10.5 10 L3 17" stroke="#a8abb0" stroke-width="2" stroke-linecap="round" stroke-linejoin="round"/></svg>
<svg style="position:absolute;left:615px;top:1154px;" width="14" height="20" viewBox="0 0 14 20" fill="none"><path d="M3 3 L10.5 10 L3 17" stroke="#a8abb0" stroke-width="2" stroke-linecap="round" stroke-linejoin="round"/></svg>
<svg style="position:absolute;left:708px;top:1154px;" width="14" height="20" viewBox="0 0 14 20" fill="none"><path d="M3 3 L10.5 10 L3 17" stroke="#a8abb0" stroke-width="2" stroke-linecap="round" stroke-linejoin="round"/></svg>
<div class="t s" style="left:295.3px;top:1149.7px;font-size:25.83px;line-height:25.83px;color:#a8abb0;">src</div>
<div class="t s" style="left:373.2px;top:1149.6px;font-size:26.01px;line-height:26.01px;color:#a8abb0;">main</div>
<div class="t s" style="left:472.6px;top:1151.6px;font-size:23.66px;line-height:23.66px;color:#a8abb0;">java</div>
<div class="t s" style="left:560.7px;top:1149.1px;font-size:26.57px;line-height:26.57px;color:#a8abb0;">org</div>
<div class="t s" style="left:641.9px;top:1149.7px;font-size:25.81px;line-height:25.81px;color:#a8abb0;">core</div>
<svg style="position:absolute;left:734.5px;top:1149.8px;" width="30" height="30" viewBox="0 0 30 30" fill="none"><circle cx="15" cy="15" r="11.4" stroke="#548af7" stroke-width="1.9"/><path d="M19.26 11.68 A5.4 5.4 0 1 0 19.26 18.32" stroke="#548af7" stroke-width="1.9" stroke-linecap="round"/></svg>
<div class="t s" style="left:772.6px;top:1150.3px;font-size:25.11px;line-height:25.11px;color:#a8abb0;">AddFacetAction.java</div>
<div class="t s" style="left:1437.9px;top:1150.1px;font-size:23.82px;line-height:23.82px;color:#a8abb0;">16:21</div>
<div class="t s" style="left:1525.1px;top:1150.3px;font-size:23.6px;line-height:23.6px;color:#a8abb0;">LF</div>
<div class="t s" style="left:1581.3px;top:1148.4px;font-size:25.88px;line-height:25.88px;color:#a8abb0;">UTF-8</div>
<div class="t s" style="left:1682.8px;top:1149.2px;font-size:24.89px;line-height:24.89px;color:#a8abb0;">2 spaces</div>
<svg style="position:absolute;left:1818px;top:1148px;" width="30" height="28" viewBox="0 0 30 28" fill="none"><rect x="3.1" y="11.7" width="15.3" height="11.6" rx="2.6" stroke="#c9cbd0" stroke-width="2.2"/><path d="M15.6 11.5 V8.6 A4.05 4.05 0 0 1 23.7 8.6 V11.5" stroke="#c9cbd0" stroke-width="2.2" stroke-linecap="round"/></svg>
<div class="t s" style="left:1750px;top:1148.2px;font-size:39.2px;line-height:39.2px;font-weight:bold;color:#4a7a4f;transform:scaleX(0.644);transform-origin:0 0;-webkit-text-stroke:1.6px #4a7a4f;">cxy5.com</div>
</div></body></html>
